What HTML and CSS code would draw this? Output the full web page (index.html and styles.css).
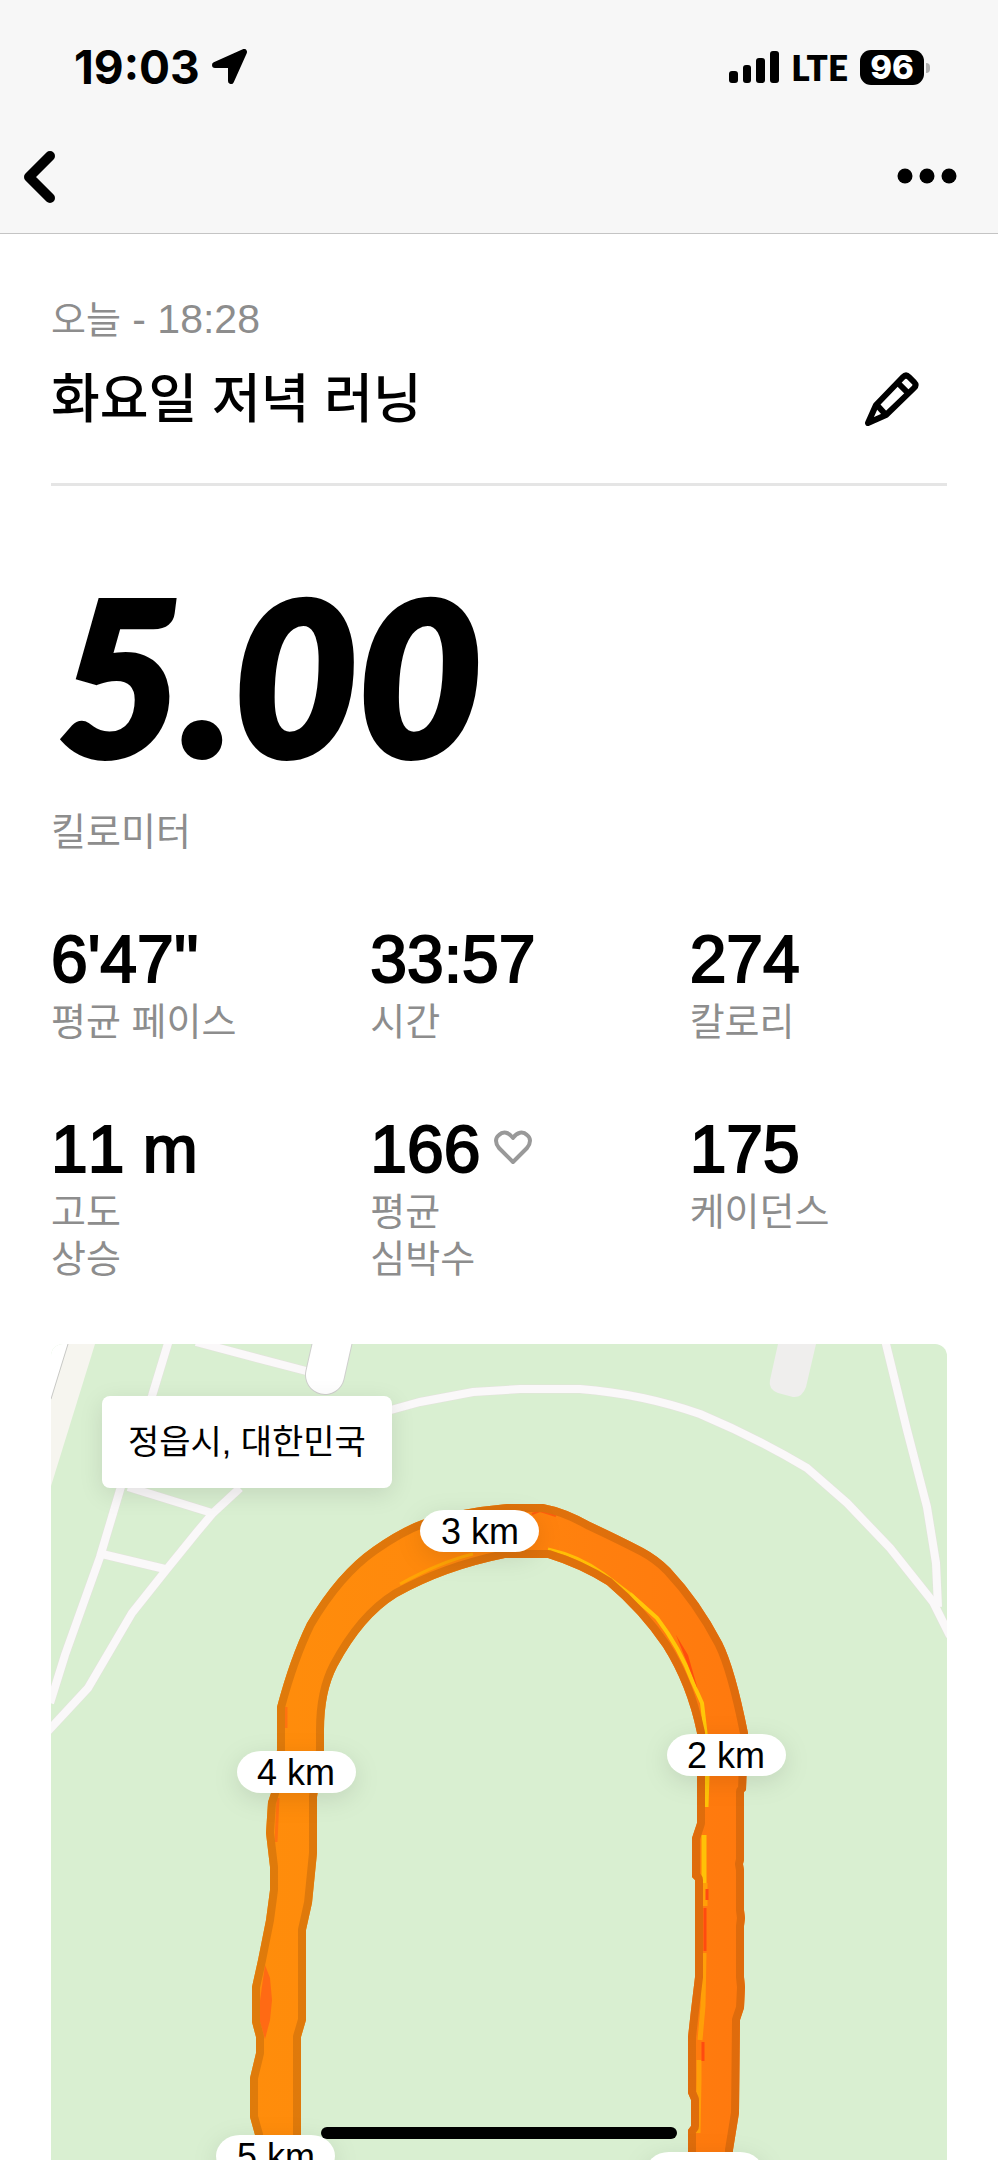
FILE: index.html
```html
<!DOCTYPE html>
<html lang="ko">
  <head>
    <meta charset="UTF-8" />
    <meta name="viewport" content="width=device-width, initial-scale=1.0" />
    <title>화요일 저녁 러닝</title>
    <link rel="stylesheet" href="styles.css">
  </head>
  <body>
    <header class="top">
      <div class="status">
        <div class="status-left">
          <span class="clock">19:03</span>
          <svg class="location" width="36" height="36" viewBox="0 0 36 36">
            <path d="M3 16 L32 3 L19 32 V16 Z" stroke="#000" stroke-width="6" stroke-linejoin="round" />
          </svg>
        </div>
        <div class="status-right">
          <svg width="50" height="32" viewBox="0 0 50 32">
            <rect x="0" y="20" width="9" height="12" rx="3" />
            <rect x="14" y="14" width="8" height="18" rx="3" />
            <rect x="27" y="7" width="9" height="25" rx="3" />
            <rect x="41" y="0" width="9" height="32" rx="3" />
          </svg>
          <span class="network">LTE</span>
          <span class="battery">96</span>
        </div>
      </div>
      <nav class="nav">
        <button type="button" class="icon-btn" aria-label="뒤로">
          <svg width="32" height="52" viewBox="0 0 32 52">
            <path d="M26 5 L5 26 L26 47" fill="none" stroke="#000" stroke-width="10" stroke-linecap="round" stroke-linejoin="round" />
          </svg>
        </button>
        <button type="button" class="icon-btn" aria-label="더보기">
          <svg width="60" height="18" viewBox="0 0 60 18">
            <circle cx="8" cy="8" r="7.5" />
            <circle cx="30" cy="8" r="7.5" />
            <circle cx="52" cy="8" r="7.5" />
          </svg>
        </button>
      </nav>
    </header>

    <main class="run">
      <section class="summary">
        <div>
          <p class="date">오늘<time> - 18:28</time></p>
          <h1 class="title">화요일 저녁 러닝</h1>
        </div>
        <button type="button" class="icon-btn edit" aria-label="이름 수정">
          <svg width="54" height="54" viewBox="0 0 54 54" fill="none" stroke="#000" stroke-width="6" stroke-linejoin="round">
            <path d="M3 51 L11 33 L38 5 Q41 2 44 5 L49 10 Q52 13 49 16 L21 43 Z" />
            <path d="M33 11 L43 21 M11 32 L21 43" />
          </svg>
        </button>
      </section>

      <section class="distance">
        <p class="distance-value">5.00</p>
        <p class="label">킬로미터</p>
      </section>

      <dl class="stats">
        <div class="stat">
          <dd>6'47''</dd>
          <dt class="label">평균 페이스</dt>
        </div>
        <div class="stat">
          <dd>33:57</dd>
          <dt class="label">시간</dt>
        </div>
        <div class="stat">
          <dd>274</dd>
          <dt class="label">칼로리</dt>
        </div>
        <div class="stat">
          <dd>11 m</dd>
          <dt class="label">고도<br />상승</dt>
        </div>
        <div class="stat">
          <dd>
            166
            <svg width="38" height="38" viewBox="0 0 38 38">
              <path d="M19 32 L5 18 C1 13 1 8 5 5 C9 1 15 2 19 8 C23 2 29 1 33 5 C37 8 37 13 33 18 Z" fill="none" stroke="#999" stroke-width="4" stroke-linejoin="round" />
            </svg>
          </dd>
          <dt class="label">평균<br />심박수</dt>
        </div>
        <div class="stat">
          <dd>175</dd>
          <dt class="label">케이던스</dt>
        </div>
      </dl>

      <section class="map">
        <svg class="map-canvas" viewBox="51 1344 896 816" preserveAspectRatio="xMidYMin slice">
          <defs>
            <linearGradient id="pace" x1="0" x2="1" y1="0" y2="0">
              <stop offset="0" stop-color="#ff8d0b" />
              <stop offset="0.35" stop-color="#ff890c" />
              <stop offset="0.7" stop-color="#ff7f0e" />
              <stop offset="1" stop-color="#ff790e" />
            </linearGradient>
            <linearGradient id="paceEdge" x1="0" x2="1" y1="0" y2="0">
              <stop offset="0" stop-color="#df7b0b" />
              <stop offset="1" stop-color="#df6b0c" />
            </linearGradient>
            <path id="track" d="M255 2180 L255 2135 L250 2117 V2078 L256 2053 V2037 L252 2022 V1987 L258 1960 L266 1920 L270 1890 V1867 L266 1833 L268 1802 L271 1793 L277 1750 V1707 Q290 1658 307 1623 Q337 1572 373 1547 Q400 1528 422 1520 Q462 1508 507 1504 H543 Q565 1508 590 1522 Q620 1536 643 1548 Q658 1556 670 1568 Q700 1600 722 1642 Q735 1668 748 1733 L746 1790 L744 1792 V1860 L743 1864 L744 1870 V1910 L745 1918 L744 1926 V1977 L745 1987 L744 2008 L740 2020 L739 2113 L733 2150 V2180 H688 V2130 L691 2126 V2100 L688 2093 V2037 L691 2010 L695 1977 V1880 L692 1877 V1838 L697 1823 V1733 Q687 1685 663 1647 Q640 1613 607 1585 Q580 1568 548 1558 H505 Q445 1570 397 1597 Q363 1618 337 1667 Q324 1692 324 1730 V1750 L317 1797 V1853 L312 1903 L306 1930 V2020 L301 2037 V2180 Z" />
            <clipPath id="trackClip">
              <use href="#track" />
            </clipPath>
          </defs>

          <rect class="park" x="51" y="1344" width="896" height="816" />
          <path d="M51 1344 H68 L51 1400 Z" fill="#fff" />
          <path d="M68 1344 H95 L51 1486 V1400 Z" fill="#f6f5ef" />
          <path d="M68 1344 L51 1399" stroke="#c9c8c6" stroke-width="1" />

          <g class="road road-edge">
            <path d="M169 1340 L152 1396 L120 1490 L100 1557 L65 1655 L50 1703" />
            <path d="M48 1731 L88 1688 L132 1613 L167 1569 L197 1532 L213 1513 L240 1488 M380 1413 L420 1402 L473 1392 L520 1389 H580 Q643 1394 700 1414 Q757 1438 807 1468 L847 1503 L890 1548 L933 1602 L950 1636" />
            <path d="M885 1340 L907 1430 L927 1507 L936 1563 L938 1607" />
            <path d="M196 1342 L310 1372 M128 1487 L212 1513 M102 1554 L165 1569" />
          </g>
          <g class="road">
            <path d="M169 1340 L152 1396 L120 1490 L100 1557 L65 1655 L50 1703" />
            <path d="M48 1731 L88 1688 L132 1613 L167 1569 L197 1532 L213 1513 L240 1488 M380 1413 L420 1402 L473 1392 L520 1389 H580 Q643 1394 700 1414 Q757 1438 807 1468 L847 1503 L890 1548 L933 1602 L950 1636" />
            <path d="M885 1340 L907 1430 L927 1507 L936 1563 L938 1607" />
            <path d="M196 1342 L310 1372 M128 1487 L212 1513 M102 1554 L165 1569" />
          </g>

          <path d="M334 1335 L325 1375" stroke="#cfcfcd" stroke-width="40" stroke-linecap="round" />
          <path d="M334 1335 L325 1375" stroke="#fff" stroke-width="38" stroke-linecap="round" />
          <path d="M778 1344 H816 L806 1387 Q802 1398 793 1397 L778 1393 Q768 1389 770 1380 Z" fill="#efeeed" />

          <!-- pace-coloured route -->
          <use href="#track" fill="url(#pace)" />
          <g clip-path="url(#trackClip)" fill="none" stroke-linejoin="round">
            <path d="M400 1584 Q440 1562 473 1554" stroke="#ffa405" stroke-width="3" />
            <path d="M548 1549 Q580 1556 604 1574 L633 1596 L657 1618" stroke="#ffbe05" stroke-width="3" />
            <path d="M630 1594 L657 1618 Q680 1648 693 1683 L702 1703 L706 1737" stroke="#ffc708" stroke-width="4" />
            <path d="M676 1635 L688 1655 L698 1690 L686 1660 Z" fill="#ff4d0d" />
            <path d="M532 1514 L540 1511 L556 1516" stroke="#ff5c0e" stroke-width="2" />
            <path d="M707 1776 L706 1807 M704 1835 V1883" stroke="#ffc207" stroke-width="5" />
            <path d="M705 1883 V1906 M704 1953 L703 2006 L700 2040 M699 2060 V2080 L698 2133" stroke="#ff9f08" stroke-width="5" />
            <path d="M705 1908 V1951 M703 2042 V2061 M707 1889 V1900" stroke="#ff4a10" stroke-width="3" />
            <path d="M265 1965 L270 1978 L272 2000 L270 2020 L265 2039 L258 2015 Z" fill="#ff6a14" />
            <path d="M286 1707 V1728 M278 1798 L276 1842" stroke="#ff7210" stroke-width="3" />
            <use href="#track" stroke="url(#paceEdge)" stroke-width="16" />
          </g>

          <g class="pin">
            <rect x="420" y="1510" width="119" height="42" rx="24" ry="21" />
            <text x="480" y="1544">3 km</text>
          </g>
          <g class="pin">
            <rect x="667" y="1734" width="119" height="42" rx="24" ry="21" />
            <text x="726" y="1768">2 km</text>
          </g>
          <g class="pin">
            <rect x="237" y="1751" width="119" height="42" rx="24" ry="21" />
            <text x="296" y="1785">4 km</text>
          </g>
          <g class="pin">
            <rect x="216" y="2135" width="119" height="42" rx="24" ry="21" />
            <text x="276" y="2169">5 km</text>
          </g>
          <g class="pin">
            <rect x="645" y="2152" width="119" height="42" rx="24" ry="21" />
          </g>
        </svg>
        <p class="place">정읍시, 대한민국</p>
      </section>
    </main>
    <div class="home-bar"></div>
  </body>
</html>
```
FILE: styles.css
```css
* {
  box-sizing: border-box;
}
body {
  display: flex;
  flex-direction: column;
  height: 100vh;
  margin: 0;
  overflow: hidden;
  background-color: #fff;
  color: #000;
  font-family: "Liberation Sans", "Noto Sans CJK KR", sans-serif;
  font-kerning: none;
}
h1,
p,
dl,
dd {
  margin: 0;
}
svg {
  display: block;
  flex: none;
}
.icon-btn {
  padding: 0;
  border: none;
  background: none;
  cursor: pointer;
}

/* status bar + nav */
.top {
  border-bottom: 1px solid #c4c4c4;
  background-color: #f7f7f7;
}
.status {
  display: flex;
  justify-content: space-between;
  align-items: center;
  height: 134px;
  padding: 0 74px;
  font-family: Inter, sans-serif;
}
.status-left,
.status-right {
  display: flex;
  align-items: center;
}
.status-left {
  gap: 12px;
}
.status-right {
  gap: 12px;
}
.clock {
  font-size: 46px;
  font-weight: 700;
}
.network {
  font-family: Lato, sans-serif;
  font-size: 35px;
  font-weight: 800;
  font-kerning: normal;
  line-height: 36px;
}
.battery {
  position: relative;
  width: 64px;
  border-radius: 11px;
  background-color: #000;
  color: #fff;
  font-size: 33px;
  font-weight: 800;
  line-height: 35px;
  text-align: center;
}
.battery::after {
  content: "";
  position: absolute;
  top: 13px;
  right: -6px;
  width: 4px;
  height: 10px;
  border-radius: 0 4px 4px 0;
  background-color: #b0b0b0;
}
.nav {
  display: flex;
  justify-content: space-between;
  align-items: center;
  height: 99px;
  padding: 0 41px 14px 24px;
}

/* run details */
.run {
  display: flex;
  flex: 1;
  flex-direction: column;
  min-height: 0;
  padding: 0 51px;
}
.summary {
  display: flex;
  justify-content: space-between;
  align-items: flex-end;
  padding: 61px 0 51px;
  border-bottom: 3px solid #e5e5e5;
}
.date {
  color: #8d8d8d;
  font-size: 38px;
  line-height: 48px;
}
.date time {
  font-size: 41px;
  white-space: pre;
}
.title {
  margin-top: 24px;
  font-size: 53px;
  font-weight: 500;
  line-height: 64px;
}
.edit {
  padding: 0 28px 6px;
}
.label {
  color: #8d8d8d;
  font-size: 38px;
  line-height: 47px;
}
.distance {
  padding-top: 108px;
}
.distance-value {
  margin-bottom: 55px;
  padding-left: 7px;
  font-family: Lato, sans-serif;
  font-size: 214px;
  font-style: italic;
  font-weight: 900;
  line-height: 160px;
  -webkit-text-stroke: 6px #000;
}
.stats {
  display: grid;
  grid-template-columns: repeat(3, 1fr);
  gap: 71px 62px;
  margin: 71px 0 61px;
}
.stat {
  display: flex;
  flex-direction: column;
  gap: 8px;
}
.stat dd {
  display: flex;
  align-items: center;
  gap: 14px;
  font-size: 66px;
  line-height: 64px;
  -webkit-text-stroke: 2px #000;
}

/* route map */
.map {
  position: relative;
  flex: 1;
  min-height: 0;
  border-radius: 12px 12px 0 0;
  overflow: hidden;
}
.map-canvas {
  width: 100%;
  height: 100%;
}
.park {
  fill: #d9efd1;
}
.road {
  fill: none;
  stroke: #faf8f9;
  stroke-width: 8px;
}
.road-edge {
  stroke: #e3e3dc;
  stroke-width: 9px;
}
.pin rect {
  fill: #fff;
  filter: drop-shadow(0 6px 12px rgba(0, 0, 0, 0.1));
}
.pin text {
  font-size: 36px;
  text-anchor: middle;
}
.place {
  position: absolute;
  top: 52px;
  left: 51px;
  padding: 0 26px;
  border-radius: 8px;
  background-color: #fff;
  box-shadow: 0 6px 24px rgba(0, 0, 0, 0.1);
  font-size: 34px;
  line-height: 92px;
}
.home-bar {
  position: fixed;
  bottom: 21px;
  left: 50%;
  width: 356px;
  height: 12px;
  border-radius: 6px;
  background-color: #000;
  transform: translateX(-50%);
}
```
